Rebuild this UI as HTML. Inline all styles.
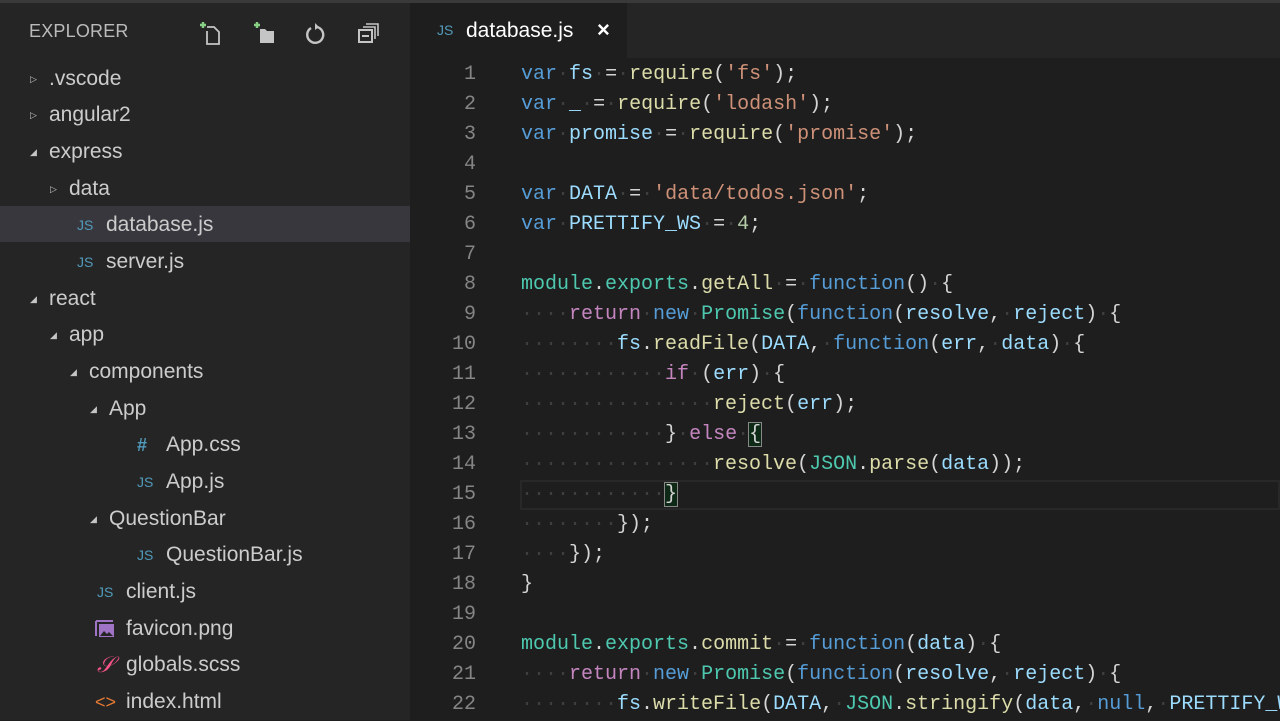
<!DOCTYPE html>
<html><head><meta charset="utf-8"><style>
*{margin:0;padding:0;box-sizing:border-box}
body{width:1280px;height:720px;overflow:hidden;background:#1e1e1e;font-family:"Liberation Sans",sans-serif;position:relative}
#top{position:absolute;left:0;top:0;width:1280px;height:3px;background:#3a3a3a}
#side{position:absolute;left:0;top:3px;width:410px;height:717px;background:#252526}
.hdr{position:absolute;left:29px;top:18px;color:#bbbbbb;font-size:18px;letter-spacing:0.2px}
.row{position:absolute;left:0;width:410px;height:36px;line-height:38px;color:#cccccc;font-size:21px;white-space:nowrap}
.row.sel{background:#37373d}
.arr{position:absolute;top:0;font-size:9px;color:#c5c5c5}
.ic{position:absolute;top:0;font-size:14px;color:#519aba}
.t{position:absolute;top:0}
#tabs{position:absolute;left:410px;top:3px;width:870px;height:55px;background:#252526}
#tab{position:absolute;left:0;top:0;width:217px;height:55px;background:#1e1e1e}
.code{position:absolute;left:410px;top:60px;width:870px;height:660px;font-family:"Liberation Mono",monospace;font-size:20px}
.ln{position:absolute;left:0;width:66px;text-align:right;color:#858585;height:30px;line-height:30px}
.cl{position:absolute;left:111px;height:30px;line-height:30px;white-space:pre;color:#d4d4d4}
.k{color:#569cd6}.v{color:#9cdcfe}.f{color:#dcdcaa}.s{color:#ce9178}.n{color:#b5cea8}.c{color:#c586c0}.ty{color:#4ec9b0}.d{color:#3e3e3e}
.bm{outline:1px solid #888;background:#0e2a16}
</style></head><body>
<div id="top"></div>
<div id="side">
<div class="hdr">EXPLORER</div>
<svg style="position:absolute;left:196px;top:16px" width="28" height="28" viewBox="0 0 28 28"><path d="M4 6h6M7 3v6" stroke="#89d185" stroke-width="2.4"/><path d="M11 8h7l5 5v12H11V12" fill="none" stroke="#c5c5c5" stroke-width="1.8"/></svg>
<svg style="position:absolute;left:250px;top:16px" width="28" height="28" viewBox="0 0 28 28"><path d="M4 6h6M7 3v6" stroke="#89d185" stroke-width="2.4"/><path d="M10 10h5l2 2h7v12H10z" fill="#c5c5c5"/></svg>
<svg style="position:absolute;left:302px;top:17px" width="26" height="26" viewBox="0 0 26 26"><path d="M9 8a8 8 0 1 0 6-1" fill="none" stroke="#c5c5c5" stroke-width="2.4"/><path d="M13 3l4 4-4 3z" fill="#c5c5c5"/></svg>
<svg style="position:absolute;left:356px;top:17px" width="26" height="26" viewBox="0 0 26 26"><rect x="3" y="10" width="13" height="12" fill="none" stroke="#c5c5c5" stroke-width="2"/><path d="M7 7h12v12M10 4h12v12" fill="none" stroke="#c5c5c5" stroke-width="1.6"/><path d="M6 16h7" stroke="#c5c5c5" stroke-width="2"/></svg>
<div class="row" style="top:57px"><span class="arr" style="left:30px">▷</span><span class="t" style="left:49px">.vscode</span></div>
<div class="row" style="top:93px"><span class="arr" style="left:30px">▷</span><span class="t" style="left:49px">angular2</span></div>
<div class="row" style="top:130px"><span class="arr" style="left:30px">◢</span><span class="t" style="left:49px">express</span></div>
<div class="row" style="top:167px"><span class="arr" style="left:50px">▷</span><span class="t" style="left:69px">data</span></div>
<div class="row sel" style="top:203px"><span class="ic" style="left:77px">JS</span><span class="t" style="left:106px">database.js</span></div>
<div class="row" style="top:240px"><span class="ic" style="left:77px">JS</span><span class="t" style="left:106px">server.js</span></div>
<div class="row" style="top:277px"><span class="arr" style="left:30px">◢</span><span class="t" style="left:49px">react</span></div>
<div class="row" style="top:313px"><span class="arr" style="left:50px">◢</span><span class="t" style="left:69px">app</span></div>
<div class="row" style="top:350px"><span class="arr" style="left:70px">◢</span><span class="t" style="left:89px">components</span></div>
<div class="row" style="top:387px"><span class="arr" style="left:90px">◢</span><span class="t" style="left:109px">App</span></div>
<div class="row" style="top:423px"><span class="ic" style="left:137px;font-size:18px;font-weight:bold">#</span><span class="t" style="left:166px">App.css</span></div>
<div class="row" style="top:460px"><span class="ic" style="left:137px">JS</span><span class="t" style="left:166px">App.js</span></div>
<div class="row" style="top:497px"><span class="arr" style="left:90px">◢</span><span class="t" style="left:109px">QuestionBar</span></div>
<div class="row" style="top:533px"><span class="ic" style="left:137px">JS</span><span class="t" style="left:166px">QuestionBar.js</span></div>
<div class="row" style="top:570px"><span class="ic" style="left:97px">JS</span><span class="t" style="left:126px">client.js</span></div>
<div class="row" style="top:607px"><svg style="position:absolute;left:95px;top:10px" width="20" height="18" viewBox="0 0 20 18"><path d="M1 1h17M1 1v15" stroke="#a074c4" stroke-width="2"/><rect x="4" y="4" width="15" height="13" fill="#a074c4"/><path d="M5 16l4-5 3 3 2-2 4 4z" fill="#252526"/></svg><span class="t" style="left:126px">favicon.png</span></div>
<div class="row" style="top:643px"><span class="t" style="left:97px;color:#f55385;font-style:italic;font-family:'Liberation Serif',serif;font-size:22px">𝒮</span><span class="t" style="left:126px">globals.scss</span></div>
<div class="row" style="top:680px"><span class="t" style="left:95px;color:#e37933;font-size:18px">&lt;&gt;</span><span class="t" style="left:126px">index.html</span></div>
</div>
<div id="tabs"><div id="tab"><span style="position:absolute;left:27px;top:19px;color:#519aba;font-size:14px">JS</span><span style="position:absolute;left:56px;top:16px;color:#ffffff;font-size:21px">database.js</span><span style="position:absolute;left:187px;top:14px;color:#fff;font-size:22px;font-weight:bold">×</span></div></div>
<div class="code">
<div style="position:absolute;left:110px;top:420px;width:760px;height:30px;border:2px solid #282828"></div>
<div class="ln" style="top:0">1</div><div class="cl" style="top:0"><span class="k">var</span><span class="d">·</span><span class="v">fs</span><span class="d">·</span>=<span class="d">·</span><span class="f">require</span>(<span class="s">'fs'</span>);</div>
<div class="ln" style="top:30px">2</div><div class="cl" style="top:30px"><span class="k">var</span><span class="d">·</span><span class="v">_</span><span class="d">·</span>=<span class="d">·</span><span class="f">require</span>(<span class="s">'lodash'</span>);</div>
<div class="ln" style="top:60px">3</div><div class="cl" style="top:60px"><span class="k">var</span><span class="d">·</span><span class="v">promise</span><span class="d">·</span>=<span class="d">·</span><span class="f">require</span>(<span class="s">'promise'</span>);</div>
<div class="ln" style="top:90px">4</div>
<div class="ln" style="top:120px">5</div><div class="cl" style="top:120px"><span class="k">var</span><span class="d">·</span><span class="v">DATA</span><span class="d">·</span>=<span class="d">·</span><span class="s">'data/todos.json'</span>;</div>
<div class="ln" style="top:150px">6</div><div class="cl" style="top:150px"><span class="k">var</span><span class="d">·</span><span class="v">PRETTIFY_WS</span><span class="d">·</span>=<span class="d">·</span><span class="n">4</span>;</div>
<div class="ln" style="top:180px">7</div>
<div class="ln" style="top:210px">8</div><div class="cl" style="top:210px"><span class="ty">module</span>.<span class="ty">exports</span>.<span class="f">getAll</span><span class="d">·</span>=<span class="d">·</span><span class="k">function</span>()<span class="d">·</span>{</div>
<div class="ln" style="top:240px">9</div><div class="cl" style="top:240px"><span class="d">····</span><span class="c">return</span><span class="d">·</span><span class="k">new</span><span class="d">·</span><span class="ty">Promise</span>(<span class="k">function</span>(<span class="v">resolve</span>,<span class="d">·</span><span class="v">reject</span>)<span class="d">·</span>{</div>
<div class="ln" style="top:270px">10</div><div class="cl" style="top:270px"><span class="d">········</span><span class="v">fs</span>.<span class="f">readFile</span>(<span class="v">DATA</span>,<span class="d">·</span><span class="k">function</span>(<span class="v">err</span>,<span class="d">·</span><span class="v">data</span>)<span class="d">·</span>{</div>
<div class="ln" style="top:300px">11</div><div class="cl" style="top:300px"><span class="d">············</span><span class="c">if</span><span class="d">·</span>(<span class="v">err</span>)<span class="d">·</span>{</div>
<div class="ln" style="top:330px">12</div><div class="cl" style="top:330px"><span class="d">················</span><span class="f">reject</span>(<span class="v">err</span>);</div>
<div class="ln" style="top:360px">13</div><div class="cl" style="top:360px"><span class="d">············</span>}<span class="d">·</span><span class="c">else</span><span class="d">·</span><span class="bm">{</span></div>
<div class="ln" style="top:390px">14</div><div class="cl" style="top:390px"><span class="d">················</span><span class="f">resolve</span>(<span class="ty">JSON</span>.<span class="f">parse</span>(<span class="v">data</span>));</div>
<div class="ln" style="top:420px">15</div><div class="cl" style="top:420px"><span class="d">············</span><span class="bm">}</span></div>
<div class="ln" style="top:450px">16</div><div class="cl" style="top:450px"><span class="d">········</span>});</div>
<div class="ln" style="top:480px">17</div><div class="cl" style="top:480px"><span class="d">····</span>});</div>
<div class="ln" style="top:510px">18</div><div class="cl" style="top:510px">}</div>
<div class="ln" style="top:540px">19</div>
<div class="ln" style="top:570px">20</div><div class="cl" style="top:570px"><span class="ty">module</span>.<span class="ty">exports</span>.<span class="f">commit</span><span class="d">·</span>=<span class="d">·</span><span class="k">function</span>(<span class="v">data</span>)<span class="d">·</span>{</div>
<div class="ln" style="top:600px">21</div><div class="cl" style="top:600px"><span class="d">····</span><span class="c">return</span><span class="d">·</span><span class="k">new</span><span class="d">·</span><span class="ty">Promise</span>(<span class="k">function</span>(<span class="v">resolve</span>,<span class="d">·</span><span class="v">reject</span>)<span class="d">·</span>{</div>
<div class="ln" style="top:630px">22</div><div class="cl" style="top:630px"><span class="d">········</span><span class="v">fs</span>.<span class="f">writeFile</span>(<span class="v">DATA</span>,<span class="d">·</span><span class="ty">JSON</span>.<span class="f">stringify</span>(<span class="v">data</span>,<span class="d">·</span><span class="k">null</span>,<span class="d">·</span><span class="v">PRETTIFY_WS</span>));</div>
</div>
</body></html>
